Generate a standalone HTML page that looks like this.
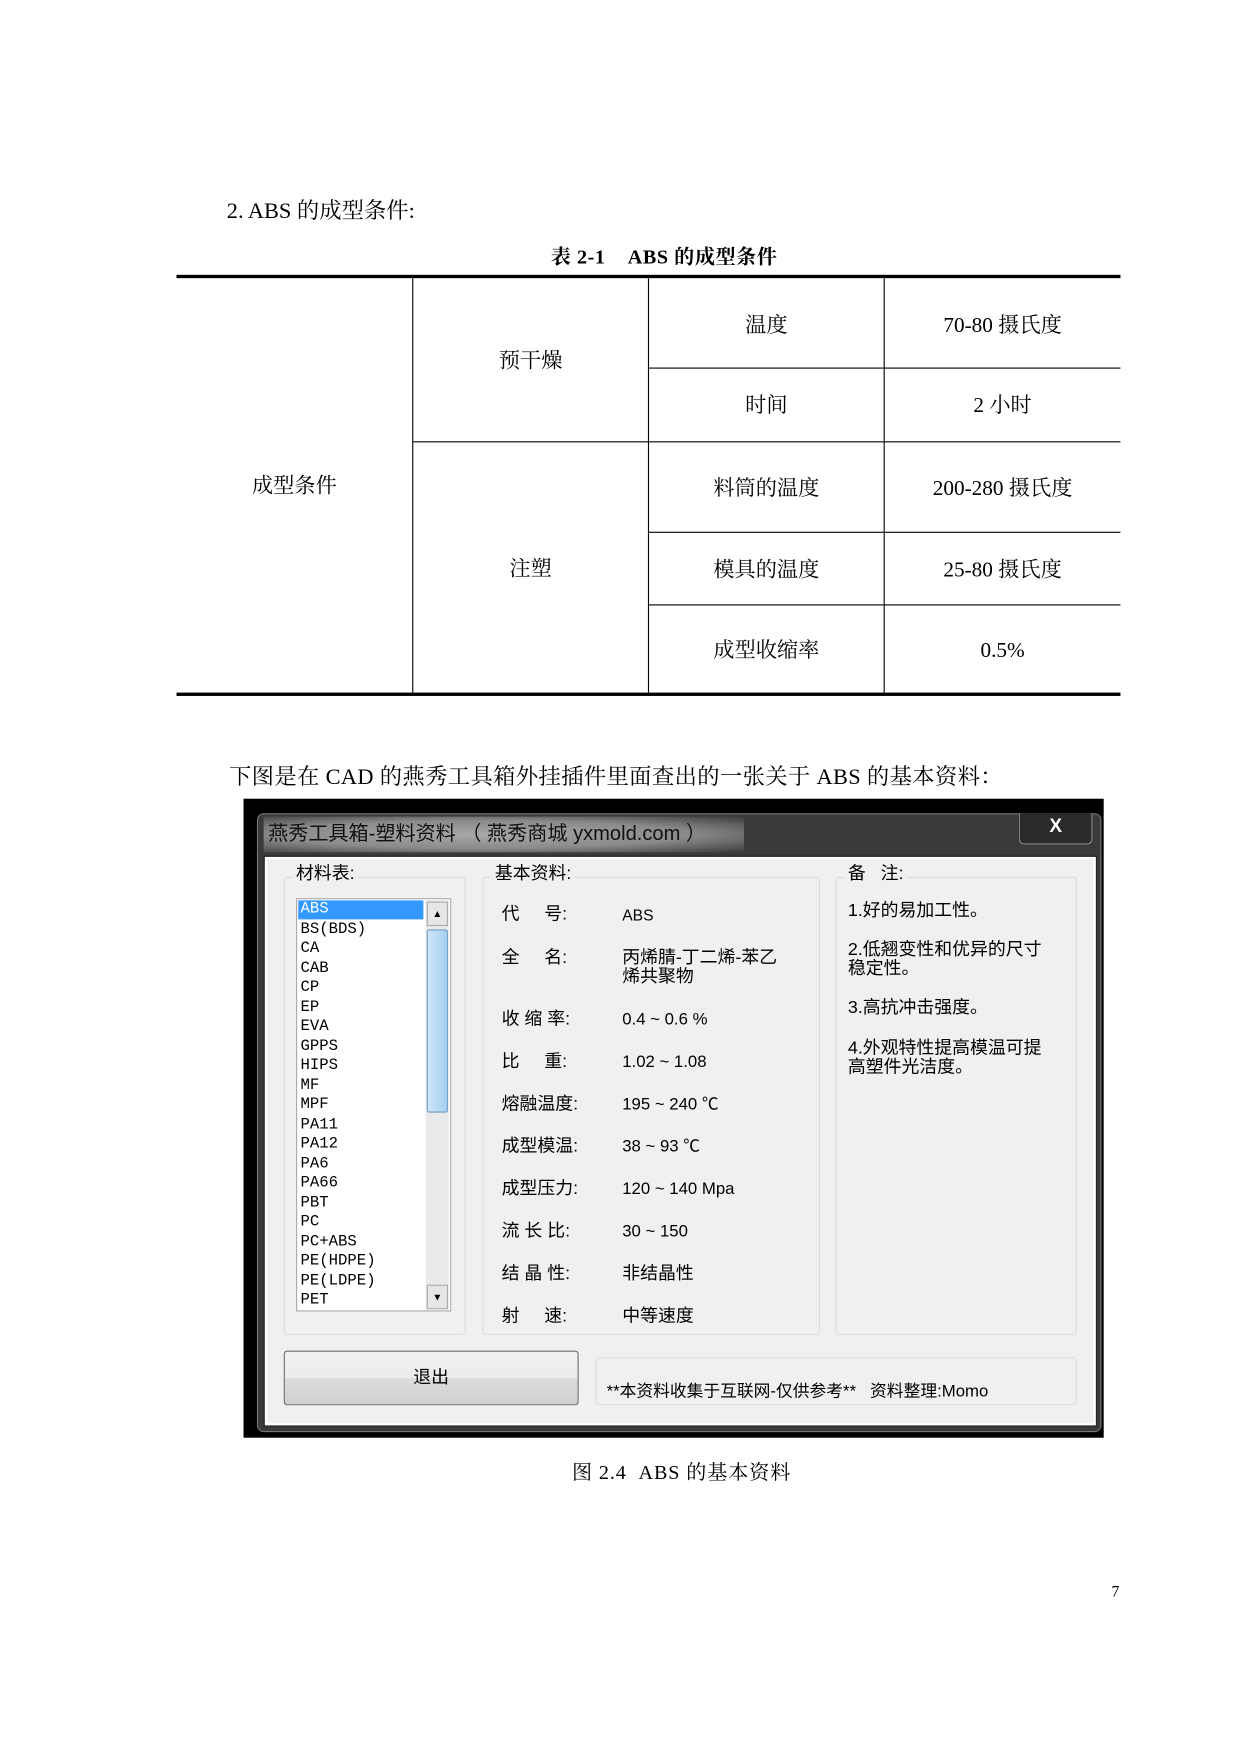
<!DOCTYPE html>
<html><head><meta charset="utf-8"><style>
html,body{margin:0;padding:0;background:#fff}
body{width:1240px;height:1754px;overflow:hidden;position:relative}
#w{position:absolute;left:0;top:0;width:1110px;height:1570px;transform:scale(1.1171);transform-origin:0 0;font-family:"Liberation Serif","Noto Serif CJK SC",serif;color:#000}
.a{position:absolute;white-space:nowrap}
.l{position:absolute;background:#000}
.c{position:absolute;text-align:center;font-size:19px;line-height:20px}
.d{font-family:"Liberation Sans","WenQuanYi Zen Hei","Noto Sans CJK SC",sans-serif;font-size:16px;line-height:18px;color:#000}
</style></head><body><div id="w">
<div class="a" style="left:203px;top:172px;font-size:20px">2. ABS 的成型条件:</div>
<div class="a" style="left:493px;top:216px;font-size:18px;font-weight:bold;letter-spacing:0.5px">表 2-1&nbsp;&nbsp;&nbsp; ABS 的成型条件</div>
<div class="l" style="left:158px;top:246px;width:845px;height:3px"></div>
<div class="l" style="left:158px;top:620px;width:845px;height:3px"></div>
<div class="l" style="left:369px;top:249px;width:1px;height:371px"></div>
<div class="l" style="left:580px;top:249px;width:1px;height:371px"></div>
<div class="l" style="left:791px;top:249px;width:1px;height:371px"></div>
<div class="l" style="left:370px;top:395px;width:633px;height:1px"></div>
<div class="l" style="left:581px;top:329px;width:422px;height:1px"></div>
<div class="l" style="left:581px;top:476px;width:422px;height:1px"></div>
<div class="l" style="left:581px;top:541px;width:422px;height:1px"></div>
<div class="c" style="left:158px;width:211px;top:426px">成型条件</div>
<div class="c" style="left:370px;width:210px;top:314px">预干燥</div>
<div class="c" style="left:370px;width:210px;top:500px">注塑</div>
<div class="c" style="left:581px;width:210px;top:282px">温度</div>
<div class="c" style="left:581px;width:210px;top:354px">时间</div>
<div class="c" style="left:581px;width:210px;top:428px">料筒的温度</div>
<div class="c" style="left:581px;width:210px;top:501px">模具的温度</div>
<div class="c" style="left:581px;width:210px;top:573px">成型收缩率</div>
<div class="c" style="left:792px;width:211px;top:282px">70-80 摄氏度</div>
<div class="c" style="left:792px;width:211px;top:354px">2 小时</div>
<div class="c" style="left:792px;width:211px;top:428px">200-280 摄氏度</div>
<div class="c" style="left:792px;width:211px;top:501px">25-80 摄氏度</div>
<div class="c" style="left:792px;width:211px;top:573px">0.5%</div>
<div class="a" style="left:205px;top:679px;font-size:20px;letter-spacing:0.3px">下图是在 CAD 的燕秀工具箱外挂插件里面查出的一张关于 ABS 的基本资料：</div>

<div style="position:absolute;left:218px;top:715px;width:770px;height:572px;background:#000"></div>
<div style="position:absolute;left:230px;top:728px;width:756px;height:554px;background:#3a3a3a;border:1px solid #777;border-radius:6px;box-sizing:border-box"></div>
<div style="position:absolute;left:236px;top:731px;width:430px;height:32px;background:radial-gradient(ellipse at 45% 50%,#a8a8a8 0%,#8a8a8a 55%,#3a3a3a 100%)"></div>
<div class="a d" style="left:240px;top:737px;font-size:18px;color:#111">燕秀工具箱-塑料资料 （ 燕秀商城 yxmold.com ）</div>
<div style="position:absolute;left:912px;top:728px;width:66px;height:28px;background:#2a2a2a;border:1px solid #888;border-top:none;border-radius:0 0 5px 5px;box-sizing:border-box;color:#fff;font:bold 17px 'Liberation Sans',sans-serif;text-align:center;line-height:24px">X</div>
<div style="position:absolute;left:237px;top:767px;width:744px;height:509px;background:#f0f0f0;border:2px solid #fff;box-sizing:border-box;outline:1px solid #222"></div>

<div style="position:absolute;left:254px;top:785px;width:163px;height:410px;border:1px solid #d5dfe5;border-radius:3px;box-sizing:border-box"></div>
<div style="position:absolute;left:432px;top:785px;width:302px;height:410px;border:1px solid #d5dfe5;border-radius:3px;box-sizing:border-box"></div>
<div style="position:absolute;left:748px;top:785px;width:216px;height:410px;border:1px solid #d5dfe5;border-radius:3px;box-sizing:border-box"></div>
<div class="a d" style="left:262px;top:774px;background:#f0f0f0;padding:0 3px">材料表:</div>
<div class="a d" style="left:440px;top:774px;background:#f0f0f0;padding:0 3px">基本资料:</div>
<div class="a d" style="left:756px;top:774px;background:#f0f0f0;padding:0 3px">备&nbsp;&nbsp;&nbsp;注:</div>

<div style="position:absolute;left:265px;top:804px;width:139px;height:370px;background:#fff;border:1px solid #aaa;box-sizing:border-box"></div>
<div style="position:absolute;left:267px;top:806px;width:112px;height:17px;background:#3399ff"></div>
<div style="position:absolute;left:381px;top:806px;width:21px;height:366px;background:#eaeaea"></div>
<div style="position:absolute;left:382px;top:807px;width:19px;height:22px;background:#e6e6e6;border:1px solid #aaa;box-sizing:border-box;font-size:9px;text-align:center;line-height:20px">▲</div>
<div style="position:absolute;left:382px;top:832px;width:19px;height:164px;background:linear-gradient(90deg,#cfe6f8,#a6cff0);border:1px solid #6f9fc8;box-sizing:border-box;border-radius:2px"></div>
<div style="position:absolute;left:382px;top:1150px;width:19px;height:22px;background:#e6e6e6;border:1px solid #aaa;box-sizing:border-box;font-size:9px;text-align:center;line-height:20px">▼</div>
<div class="a" style="left:269px;top:806px;font-family:'Liberation Mono','DejaVu Sans Mono',monospace;font-size:14px;line-height:17.5px;color:#000"><span style="color:#fff">ABS</span><br>BS(BDS)<br>CA<br>CAB<br>CP<br>EP<br>EVA<br>GPPS<br>HIPS<br>MF<br>MPF<br>PA11<br>PA12<br>PA6<br>PA66<br>PBT<br>PC<br>PC+ABS<br>PE(HDPE)<br>PE(LDPE)<br>PET</div>

<div class="a d" style="left:449px;top:810px">代&nbsp;&nbsp;&nbsp;&nbsp;&nbsp;号:</div><div class="a d" style="left:557px;top:810px;font-size:14px">ABS</div>
<div class="a d" style="left:449px;top:849px">全&nbsp;&nbsp;&nbsp;&nbsp;&nbsp;名:</div><div class="a d" style="left:557px;top:849px;line-height:17px">丙烯腈-丁二烯-苯乙<br>烯共聚物</div>
<div class="a d" style="left:449px;top:904px">收 缩 率:</div><div class="a d" style="left:557px;top:904px;font-size:15px">0.4 ~ 0.6 %</div>
<div class="a d" style="left:449px;top:942px">比&nbsp;&nbsp;&nbsp;&nbsp;&nbsp;重:</div><div class="a d" style="left:557px;top:942px;font-size:15px">1.02 ~ 1.08</div>
<div class="a d" style="left:449px;top:980px">熔融温度:</div><div class="a d" style="left:557px;top:980px;font-size:15px">195 ~ 240 ℃</div>
<div class="a d" style="left:449px;top:1018px">成型模温:</div><div class="a d" style="left:557px;top:1018px;font-size:15px">38 ~ 93 ℃</div>
<div class="a d" style="left:449px;top:1056px">成型压力:</div><div class="a d" style="left:557px;top:1056px;font-size:15px">120 ~ 140 Mpa</div>
<div class="a d" style="left:449px;top:1094px">流 长 比:</div><div class="a d" style="left:557px;top:1094px;font-size:15px">30 ~ 150</div>
<div class="a d" style="left:449px;top:1132px">结 晶 性:</div><div class="a d" style="left:557px;top:1132px">非结晶性</div>
<div class="a d" style="left:449px;top:1170px">射&nbsp;&nbsp;&nbsp;&nbsp;&nbsp;速:</div><div class="a d" style="left:557px;top:1170px">中等速度</div>

<div class="a d" style="left:759px;top:807px">1.好的易加工性。</div>
<div class="a d" style="left:759px;top:842px;line-height:17px">2.低翘变性和优异的尺寸<br>稳定性。</div>
<div class="a d" style="left:759px;top:894px">3.高抗冲击强度。</div>
<div class="a d" style="left:759px;top:930px;line-height:17px">4.外观特性提高模温可提<br>高塑件光洁度。</div>

<div style="position:absolute;left:254px;top:1209px;width:264px;height:49px;border:1px solid #707070;border-radius:3px;box-sizing:border-box;background:linear-gradient(#f2f2f2 0%,#ebebeb 50%,#dddddd 51%,#d0d0d0 100%)"></div>
<div class="a d" style="left:254px;width:264px;top:1225px;text-align:center">退出</div>
<div style="position:absolute;left:533px;top:1215px;width:431px;height:43px;border:1px solid #d5dfe5;border-radius:3px;box-sizing:border-box"></div>
<div class="a d" style="left:543px;top:1237px;font-size:15px">**本资料收集于互联网-仅供参考**&nbsp;&nbsp;&nbsp;资料整理:Momo</div>

<div class="a" style="left:512px;top:1304px;font-size:18px;letter-spacing:0.8px">图 2.4&nbsp;&nbsp;ABS 的基本资料</div>
<div class="a" style="left:995px;top:1418px;font-size:14px">7</div>
</div></body></html>
